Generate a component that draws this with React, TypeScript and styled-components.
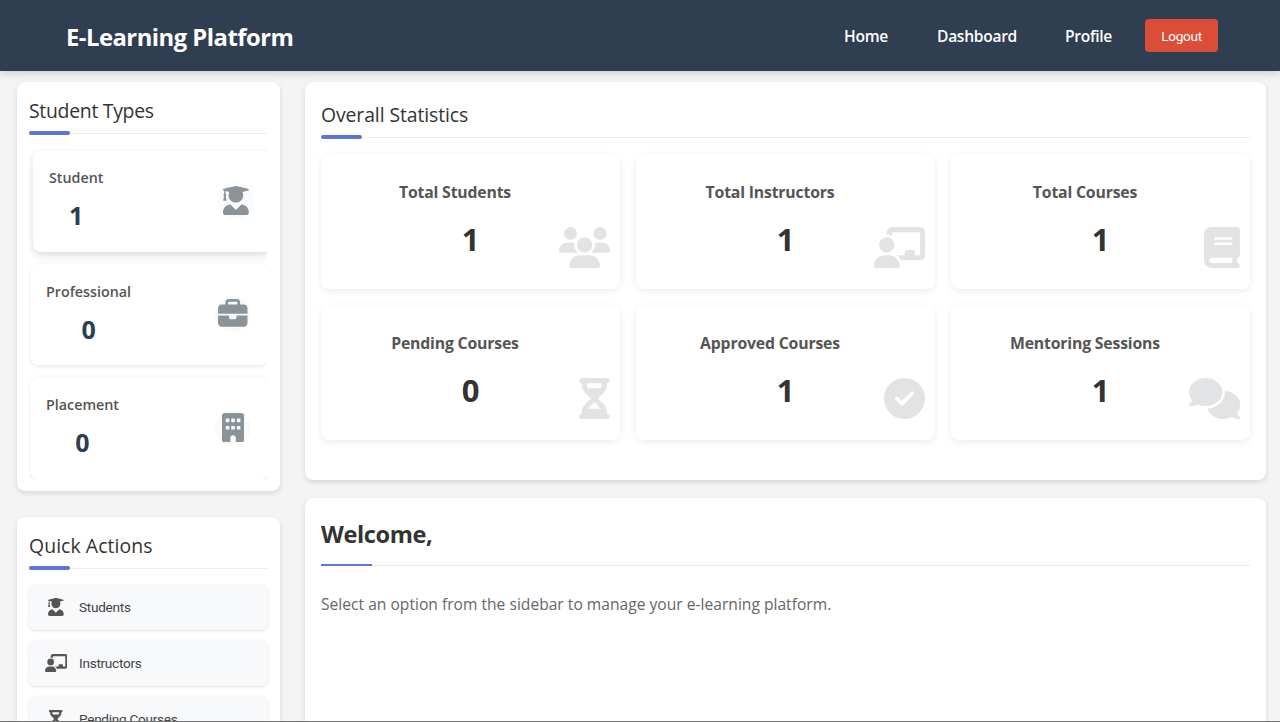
import React from 'react';
import styled, { createGlobalStyle } from 'styled-components';
import {
  FaBook,
  FaBriefcase,
  FaBuilding,
  FaChalkboardUser,
  FaCircleCheck,
  FaComments,
  FaHourglassHalf,
  FaUsers,
} from 'react-icons/fa6';
import { FaUserGraduate } from 'react-icons/fa';
import type { IconType } from 'react-icons';

const GlobalStyle = createGlobalStyle`
  * { box-sizing: border-box; }
  body {
    margin: 0;
    background: #f4f4f4;
    color: #333;
    font-family: 'Segoe UI', 'Open Sans', 'Noto Sans', sans-serif;
  }
  h1, h2, h3, p { margin: 0; }
  svg { display: block; }
`;

const Page = styled.div`
  height: 722px;
  overflow: hidden;
  display: flex;
  flex-direction: column;
  border-bottom: 1px solid #777;
`;

const Header = styled.header`
  height: 71px;
  flex: none;
  display: flex;
  align-items: center;
  justify-content: space-between;
  padding: 0 62px 0 66px;
  background: #2f3e50;
  color: #fff;
  box-shadow: 0 2px 8px rgba(40, 20, 50, 0.2);
  z-index: 1;
`;

const Logo = styled.h1`
  font-size: 23.8px;
  line-height: 32px;
  font-weight: 700;
  letter-spacing: -0.5px;
  padding-top: 2px;
`;

const Nav = styled.nav`
  display: flex;
  align-items: center;
`;

const NavLink = styled.a<{ $width: number; $gap: number }>`
  width: ${(p) => p.$width}px;
  margin-right: ${(p) => p.$gap}px;
  white-space: nowrap;
  font-size: 15.6px;
  line-height: 22px;
  font-weight: 600;
  letter-spacing: -0.3px;
  padding-top: 1px;
`;

const Logout = styled.button`
  width: 73px;
  height: 33px;
  padding: 0;
  border: 0;
  border-radius: 4px;
  background: #db4c39;
  color: #fff;
  font: 13.6px Roboto, Arial, sans-serif;
  letter-spacing: -0.3px;
`;

const Body = styled.div`
  flex: 1;
  min-height: 0;
  display: flex;
  gap: 25px;
  padding: 11px 14px 0 17px;
`;

const Column = styled.div<{ $width?: number; $gap: number }>`
  display: flex;
  flex-direction: column;
  gap: ${(p) => p.$gap}px;
  ${(p) => (p.$width ? `width: ${p.$width}px; flex: none;` : 'flex: 1; min-width: 0;')}
`;

const Panel = styled.section<{ $height: number; $pad: string }>`
  height: ${(p) => p.$height}px;
  flex: none;
  padding: ${(p) => p.$pad};
  border-radius: 8px;
  background: #fff;
  box-shadow: 0 2px 5px rgba(0, 0, 0, 0.13);
`;

const PanelTitle = styled.h2<{ $spacing?: number }>`
  position: relative;
  height: 39px;
  border-bottom: 1px solid #eee;
  font-size: 19.4px;
  line-height: 32px;
  font-weight: 400;
  letter-spacing: ${(p) => p.$spacing ?? -0.1}px;
  &::after {
    content: '';
    position: absolute;
    left: 0;
    bottom: -2px;
    width: 41px;
    height: 4px;
    border-radius: 2px;
    background: #5b74d6;
  }
`;

const TypeList = styled.div`
  margin-top: 14px;
  padding-top: 2.5px;
  height: 331px;
  overflow: hidden;
  display: flex;
  flex-direction: column;
  gap: 12.5px;
`;

const TypeCard = styled.div<{ $raised?: boolean }>`
  height: 101px;
  flex: none;
  display: flex;
  align-items: center;
  justify-content: space-between;
  padding: 0 17px 1px 16px;
  border-radius: 8px;
  background: #fff;
  margin-left: ${(p) => (p.$raised ? 4 : 1)}px;
  margin-right: ${(p) => (p.$raised ? -4 : -1)}px;
  box-shadow: ${(p) =>
    p.$raised ? '0 3px 8px rgba(0, 0, 0, 0.15)' : '0 1px 5px rgba(0, 0, 0, 0.1)'};
`;

const TypeInfo = styled.div`
  text-align: center;
`;

const TypeName = styled.h3`
  font-size: 14.3px;
  line-height: 20px;
  font-weight: 600;
  color: #555;
`;

const TypeCount = styled.div`
  margin-top: 9px;
  font-size: 25px;
  line-height: 36px;
  font-weight: 700;
  color: #2c3e50;
`;

/* Font Awesome glyphs share one height; their widths follow each view box. */
const Glyph = styled.span<{ $size: number; $ratio: number }>`
  flex: none;
  display: block;
  svg {
    height: ${(p) => p.$size}px;
    width: ${(p) => p.$size * p.$ratio}px;
  }
`;

const TypeIcon = styled.div`
  width: 36px;
  height: 36px;
  display: flex;
  align-items: center;
  justify-content: center;
  border-radius: 50%;
  background: #f8fafc;
  color: #8b9399;
`;

const ActionList = styled.div`
  margin-top: 15.5px;
  display: flex;
  flex-direction: column;
  gap: 11.2px;
`;

const Action = styled.button`
  height: 45px;
  display: flex;
  align-items: center;
  padding: 0 16px;
  border: 0;
  border-radius: 6px;
  background: #f8f9fb;
  box-shadow: 0 1px 3px rgba(0, 0, 0, 0.12);
  color: #444;
  font: 13.6px Roboto, Arial, sans-serif;
  letter-spacing: -0.28px;
`;

const ActionIcon = styled.span`
  width: 22px;
  margin-right: 12px;
  display: flex;
  justify-content: center;
  color: #555;
`;

const StatGrid = styled.div`
  margin-top: 16px;
  display: grid;
  grid-template-columns: repeat(3, 1fr);
  gap: 16px;
`;

const StatCard = styled.div`
  position: relative;
  height: 135px;
  padding-top: 27px;
  border-radius: 8px;
  background: #fff;
  box-shadow: 0 2px 7px rgba(0, 0, 0, 0.08);
  text-align: center;
`;

const StatName = styled.h3`
  padding-right: 31px;
  font-size: 15.8px;
  line-height: 22px;
  font-weight: 700;
  letter-spacing: -0.18px;
  color: #555;
`;

const StatValue = styled.div`
  margin-top: 14px;
  font-size: 31px;
  line-height: 44px;
  font-weight: 700;
  color: #333;
`;

const StatIcon = styled.div`
  position: absolute;
  right: 10px;
  bottom: 21px;
  color: #e1e3e5;
`;

const Welcome = styled.h2`
  position: relative;
  height: 53px;
  border-bottom: 1px solid #eaeaea;
  font-size: 23.6px;
  line-height: 42px;
  font-weight: 700;
  letter-spacing: -0.4px;
  &::after {
    content: '';
    position: absolute;
    left: 0;
    bottom: -1px;
    width: 51px;
    height: 2px;
    background: #6078cf;
  }
`;

const Intro = styled.p`
  margin-top: 26px;
  font-size: 15.6px;
  line-height: 24px;
  letter-spacing: 0.01px;
  color: #666;
`;

interface IconSpec {
  Icon: IconType;
  ratio: number;
}

const graduate: IconSpec = { Icon: FaUserGraduate, ratio: 0.875 };
const briefcase: IconSpec = { Icon: FaBriefcase, ratio: 1 };
const building: IconSpec = { Icon: FaBuilding, ratio: 0.75 };
const chalkboard: IconSpec = { Icon: FaChalkboardUser, ratio: 1.25 };
const hourglass: IconSpec = { Icon: FaHourglassHalf, ratio: 0.75 };
const users: IconSpec = { Icon: FaUsers, ratio: 1.25 };
const book: IconSpec = { Icon: FaBook, ratio: 0.875 };
const check: IconSpec = { Icon: FaCircleCheck, ratio: 1 };
const comments: IconSpec = { Icon: FaComments, ratio: 1.25 };

function Symbol({ icon, size }: { icon: IconSpec; size: number }) {
  const { Icon, ratio } = icon;
  return (
    <Glyph $size={size} $ratio={ratio}>
      <Icon />
    </Glyph>
  );
}

const types = [
  { name: 'Student', count: 1, icon: graduate, raised: true },
  { name: 'Professional', count: 0, icon: briefcase },
  { name: 'Placement', count: 0, icon: building },
];

const actions = [
  { name: 'Students', icon: graduate },
  { name: 'Instructors', icon: chalkboard },
  { name: 'Pending Courses', icon: hourglass },
];

const stats = [
  { name: 'Total Students', value: 1, icon: users },
  { name: 'Total Instructors', value: 1, icon: chalkboard },
  { name: 'Total Courses', value: 1, icon: book },
  { name: 'Pending Courses', value: 0, icon: hourglass },
  { name: 'Approved Courses', value: 1, icon: check },
  { name: 'Mentoring Sessions', value: 1, icon: comments },
];

export default function App() {
  return (
    <Page>
      <GlobalStyle />
      <Header>
        <Logo>E-Learning Platform</Logo>
        <Nav>
          <NavLink $width={45} $gap={48}>Home</NavLink>
          <NavLink $width={80} $gap={48}>Dashboard</NavLink>
          <NavLink $width={48} $gap={32}>Profile</NavLink>
          <Logout>Logout</Logout>
        </Nav>
      </Header>
      <Body>
        <Column $width={263} $gap={26}>
          <Panel $height={409} $pad="13px 13px 0 12px">
            <PanelTitle $spacing={-0.28}>Student Types</PanelTitle>
            <TypeList>
              {types.map(({ name, count, icon, raised }) => (
                <TypeCard key={name} $raised={raised}>
                  <TypeInfo>
                    <TypeName>{name}</TypeName>
                    <TypeCount>{count}</TypeCount>
                  </TypeInfo>
                  <TypeIcon><Symbol icon={icon} size={29.5} /></TypeIcon>
                </TypeCard>
              ))}
            </TypeList>
          </Panel>
          <Panel $height={300} $pad="13px 12px 0 12px">
            <PanelTitle $spacing={0.08}>Quick Actions</PanelTitle>
            <ActionList>
              {actions.map(({ name, icon }) => (
                <Action key={name}>
                  <ActionIcon><Symbol icon={icon} size={18} /></ActionIcon>
                  {name}
                </Action>
              ))}
            </ActionList>
          </Panel>
        </Column>
        <Column $gap={18}>
          <Panel $height={398} $pad="17px 16px 0 16px">
            <PanelTitle>Overall Statistics</PanelTitle>
            <StatGrid>
              {stats.map(({ name, value, icon }) => (
                <StatCard key={name}>
                  <StatName>{name}</StatName>
                  <StatValue>{value}</StatValue>
                  <StatIcon><Symbol icon={icon} size={41} /></StatIcon>
                </StatCard>
              ))}
            </StatGrid>
          </Panel>
          <Panel $height={300} $pad="15px 16px 0 16px">
            <Welcome>Welcome,</Welcome>
            <Intro>Select an option from the sidebar to manage your e-learning platform.</Intro>
          </Panel>
        </Column>
      </Body>
    </Page>
  );
}
